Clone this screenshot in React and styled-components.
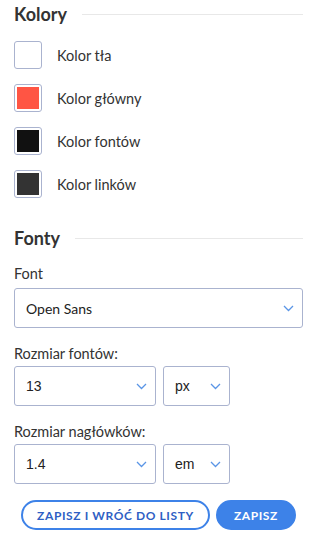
import React from "react";
import styled, { createGlobalStyle } from "styled-components";

const GlobalStyle = createGlobalStyle`
  body {
    margin: 0;
    background: #fff;
    font-family: "Source Sans Pro", Lato, "Noto Sans", sans-serif;
    color: #333;
  }
`;

const Panel = styled.div`
  width: 313px;
  box-sizing: border-box;
  padding: 0 10px 0 14px;
`;

const SectionHeader = styled.div`
  display: flex;
  align-items: center;
  gap: 15px;
  height: 28px;
  margin-top: ${(p) => p.$top || 0}px;
`;

const SectionTitle = styled.h3`
  margin: 0;
  font-size: 18px;
  font-weight: 700;
  color: #333;
  line-height: 28px;
`;

const Rule = styled.div`
  flex: 1;
  height: 1px;
  background: #e8e8e8;
`;

const SwatchList = styled.div`
  display: flex;
  flex-direction: column;
  gap: 15px;
  margin-top: 13px;
`;

const SwatchRow = styled.div`
  display: flex;
  align-items: center;
  gap: 15px;
  height: 28px;
  font-size: 14.5px;
  color: #333;
`;

const Swatch = styled.div`
  width: 28px;
  height: 28px;
  box-sizing: border-box;
  border: 1px solid #aab3cf;
  border-radius: 3px;
  padding: 2px;
  display: flex;
  & > span {
    flex: 1;
    background: ${(p) => p.$color};
  }
`;

const Field = styled.div`
  margin-top: ${(p) => p.$top}px;
`;

const Label = styled.div`
  font-size: 14.5px;
  line-height: 18px;
  color: #333;
  margin-bottom: ${(p) => p.$gap || 3}px;
`;

const Row = styled.div`
  display: flex;
  gap: 7px;
`;

const SelectBox = styled.div`
  display: flex;
  align-items: center;
  justify-content: space-between;
  width: ${(p) => p.$w};
  height: 40px;
  box-sizing: border-box;
  border: 1px solid #aab3cf;
  border-radius: 3px;
  padding: 0 8px 0 11px;
  font-family: ${(p) => (p.$arial ? '"Liberation Sans", Arial, sans-serif' : 'inherit')};
  font-size: 14px;
  color: #222;
`;

const Chevron = () => (
  <svg width="11" height="7" viewBox="0 0 11 7">
    <path d="M1 1 L5.5 5.5 L10 1" fill="none" stroke="#5a95e6" strokeWidth="1.3" />
  </svg>
);

const Select = ({ value, w, arial }) => (
  <SelectBox $w={w} $arial={arial}>
    <span>{value}</span>
    <Chevron />
  </SelectBox>
);

const Buttons = styled.div`
  display: flex;
  justify-content: center;
  gap: 6px;
  margin-top: 16px;
`;

const Button = styled.button`
  height: 30px;
  box-sizing: border-box;
  padding: 0 ${(p) => (p.$primary ? 16 : 14)}px;
  border-radius: 15px;
  border: 2px solid #3d82e8;
  background: ${(p) => (p.$primary ? "#3d82e8" : "#fff")};
  color: ${(p) => (p.$primary ? "#fff" : "#2f5fc4")};
  font-family: inherit;
  font-size: 12px;
  font-weight: 700;
  letter-spacing: 0.6px;
  white-space: nowrap;
  text-transform: uppercase;
`;

const swatches = [
  { color: "#ffffff", label: "Kolor tła" },
  { color: "#ff5544", label: "Kolor główny" },
  { color: "#111111", label: "Kolor fontów" },
  { color: "#333333", label: "Kolor linków" },
];

export default function App() {
  return (
    <Panel>
      <GlobalStyle />
      <SectionHeader>
        <SectionTitle>Kolory</SectionTitle>
        <Rule />
      </SectionHeader>
      <SwatchList>
        {swatches.map((s) => (
          <SwatchRow key={s.label}>
            <Swatch $color={s.color}>
              <span />
            </Swatch>
            {s.label}
          </SwatchRow>
        ))}
      </SwatchList>

      <SectionHeader $top={26}>
        <SectionTitle>Fonty</SectionTitle>
        <Rule />
      </SectionHeader>
      <Field $top={13}>
        <Label $gap={5}>Font</Label>
        <Row>
          <Select value="Open Sans" w="100%" />
        </Row>
      </Field>
      <Field $top={17}>
        <Label>Rozmiar fontów:</Label>
        <Row>
          <Select value="13" w="142px" arial />
          <Select value="px" w="67px" arial />
        </Row>
      </Field>
      <Field $top={17}>
        <Label>Rozmiar nagłówków:</Label>
        <Row>
          <Select value="1.4" w="142px" arial />
          <Select value="em" w="67px" arial />
        </Row>
      </Field>
      <Buttons>
        <Button>Zapisz i wróć do listy</Button>
        <Button $primary>Zapisz</Button>
      </Buttons>
    </Panel>
  );
}
